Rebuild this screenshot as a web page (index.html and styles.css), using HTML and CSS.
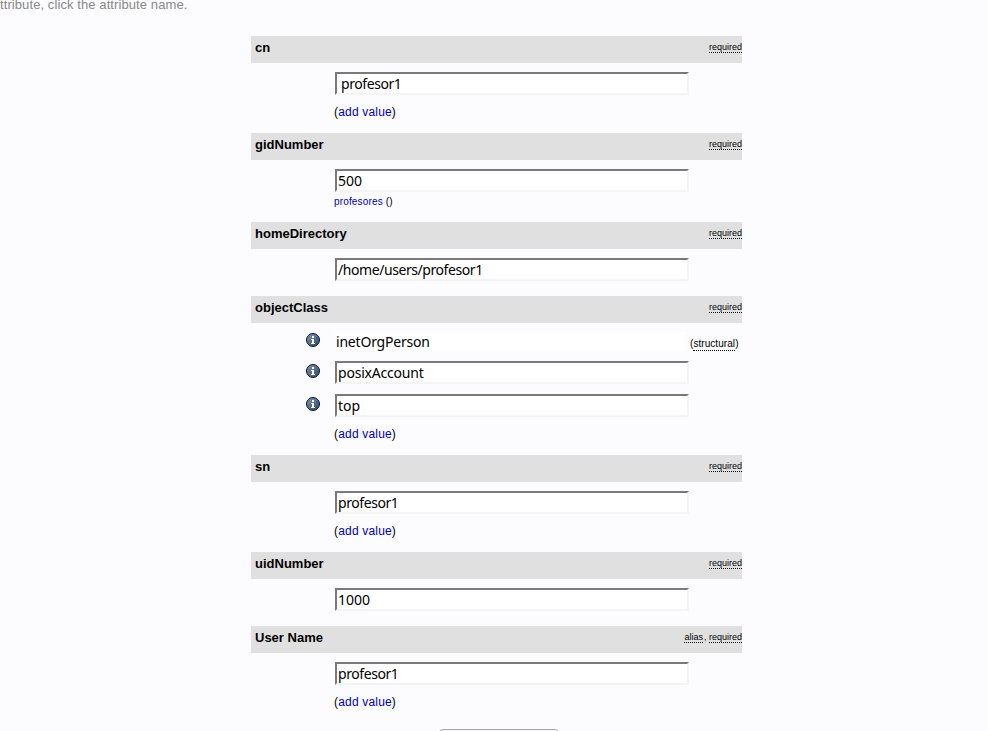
FILE: index.html
```
<!DOCTYPE html>
<html lang="en">
<head>
<meta charset="utf-8">
<title>Entry editor</title>
<link rel="stylesheet" href="styles.css">
</head>
<body>
<svg class="defs" width="0" height="0">
  <defs>
    <linearGradient id="shade" x1="0" y1="0" x2="1" y2="1">
      <stop offset="0" stop-color="#8299b8"/>
      <stop offset="1" stop-color="#2a4468"/>
    </linearGradient>
    <symbol id="info" viewBox="0 0 14 14">
      <circle cx="7" cy="7" r="6.5" fill="url(#shade)" stroke="#10151d"/>
      <path d="M6 3h2v2H6zM5 6h3v4h1v1H5v-1h1V7H5z" fill="#fff"/>
    </symbol>
  </defs>
</svg>
<p class="hint">ttribute, click the attribute name.</p>
<main class="form">
  <section class="attr">
    <header><h2>cn</h2><div class="notes"><span>required</span></div></header>
    <div class="row"><div class="field spaced tight">profesor1</div></div>
    <p class="add">(<a>add value</a>)</p>
  </section>
  <section class="attr gid">
    <header><h2>gidNumber</h2><div class="notes"><span>required</span></div></header>
    <div class="row"><div class="field">500</div></div>
    <p class="group"><a>profesores</a> ()</p>
  </section>
  <section class="attr single">
    <header><h2>homeDirectory</h2><div class="notes"><span>required</span></div></header>
    <div class="row"><div class="field tight">/home/users/profesor1</div></div>
  </section>
  <section class="attr classes">
    <header><h2>objectClass</h2><div class="notes"><span>required</span></div></header>
    <div class="row"><svg class="icon"><use href="#info"/></svg><div class="field plain snug">inetOrgPerson</div><div class="kind">(<span>structural</span>)</div></div>
    <div class="row"><svg class="icon"><use href="#info"/></svg><div class="field snug">posixAccount</div></div>
    <div class="row"><svg class="icon"><use href="#info"/></svg><div class="field">top</div></div>
    <p class="add">(<a>add value</a>)</p>
  </section>
  <section class="attr">
    <header><h2>sn</h2><div class="notes"><span>required</span></div></header>
    <div class="row"><div class="field tight">profesor1</div></div>
    <p class="add">(<a>add value</a>)</p>
  </section>
  <section class="attr single">
    <header><h2>uidNumber</h2><div class="notes"><span>required</span></div></header>
    <div class="row"><div class="field">1000</div></div>
  </section>
  <section class="attr user">
    <header><h2>User Name</h2><div class="notes"><span class="alias">alias</span>, <span>required</span></div></header>
    <div class="row"><div class="field tight">profesor1</div></div>
    <p class="add">(<a>add value</a>)</p>
  </section>
  <div class="submit"></div>
</main>
</body>
</html>
```
FILE: styles.css
```
* { box-sizing: border-box; }
body {
  margin: 0;
  height: 731px;
  overflow: hidden;
  background: #fcfcfe;
  color: #000;
  font: 12px/14px "Liberation Sans", Arial, sans-serif;
}
.defs { display: block; }
h2, p { margin: 0; }
a { color: #0000aa; }
.hint {
  height: 36px;
  margin-top: -3px;
  margin-bottom: 3px;
  color: #888;
  font-size: 13px;
  line-height: 15px;
  letter-spacing: 0.09px;
}
.form { width: 491px; margin-left: 251px; }
.attr { height: 97px; }
.attr.gid { height: 89px; }
.attr.single { height: 74px; }
.attr.classes { height: 159px; }
.attr.user { height: 103px; }
header {
  display: flex;
  justify-content: space-between;
  height: 27px;
  padding: 4px 0 0 4px;
  background: #e0e0e0;
}
h2 { font-size: 13px; line-height: 15px; }
.notes { font-size: 9px; line-height: 10px; padding-top: 2px; }
.notes span { display: inline-block; height: 11px; border-bottom: 1px dotted #000; }
.notes .alias { margin-right: 1px; }
.row { display: flex; margin-top: 9px; padding-left: 84px; }
.field {
  width: 354px;
  height: 23px;
  padding-left: 1px;
  border: 2px solid #f4f4f4;
  border-top-color: #7a7a7a;
  border-left-color: #7a7a7a;
  background: #fff;
  font: 14px/20px "Noto Sans", sans-serif;
  white-space: nowrap;
}
.field.spaced { padding-left: 4px; }
.field.plain { width: 350px; height: 19px; border: 0; line-height: 20px; }
.field.tight { letter-spacing: -0.43px; }
.field.snug { letter-spacing: -0.2px; }
.add { margin: 10px 0 0 83px; letter-spacing: 0.18px; }
.group { margin: 4px 0 0 83px; font-size: 10px; line-height: 12px; letter-spacing: 0.16px; }
.icon { width: 14px; height: 14px; margin: 3px 15px 0 -29px; }
.classes .row + .row { margin-top: 10px; }
.classes .row:nth-child(2) .icon { margin-top: 1px; }
.kind { margin: 6px 0 0 5px; font-size: 10px; line-height: 11px; letter-spacing: 0.06px; }
.kind span { display: inline-block; height: 13px; border-bottom: 1px dotted #000; }
.submit {
  width: 120px;
  height: 26px;
  margin-left: 188px;
  border: 1px solid #a8a8a8;
  border-radius: 4px;
  background: #f4f4f4;
}
```
